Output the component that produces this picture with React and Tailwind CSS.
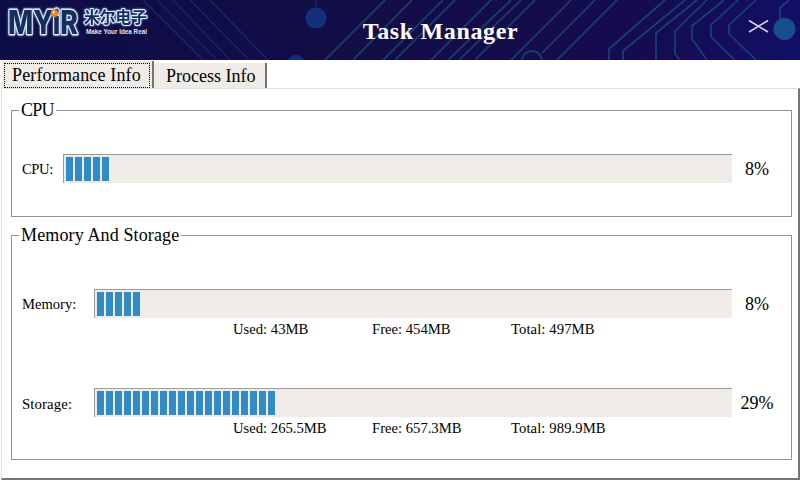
const blocks = (n) => Array.from({ length: n }, (_, i) => <div key={i} className="h-6 w-[7px] shrink-0 bg-[#308cc6]" />);

function Bar({ count }) {
  return (
    <div className="flex h-[29px] grow gap-[2px] border-l border-t border-[#9f9b98] bg-[#efebe7] pl-[2px] pt-[2px]">
      {blocks(count)}
    </div>
  );
}

function Meter({ label, labelClass, count, value }) {
  return (
    <div className="flex h-[29px] items-center pr-[9px]">
      <div className={labelClass}>{label}</div>
      <Bar count={count} />
      <div className="w-[50px] pt-[1px] text-center text-[18px] leading-[20px]">{value}</div>
    </div>
  );
}

function Stats({ used, free, total }) {
  return (
    <div className="flex pl-[211px] text-[14.65px] leading-[18px]">
      <div className="w-[139px]">Used: {used}</div>
      <div className="w-[139px]">Free: {free}</div>
      <div className="tracking-[0.1px]">Total: {total}</div>
    </div>
  );
}

function Logo() {
  return (
    <svg className="absolute left-0 top-0" width="200" height="60">
      <g className="[filter:drop-shadow(0_0_1px_#8fa9dc)]" fill="#142f5c" stroke="#dbe7fb" strokeLinejoin="round" paintOrder="stroke">
        <text x="8" y="33.5" fontFamily="Inter, sans-serif" fontWeight="800" fontSize="32" strokeWidth="2.8" textLength="70" lengthAdjust="spacingAndGlyphs">MYiR</text>
        <text x="84" y="22.5" fontFamily="'Noto Sans CJK SC', sans-serif" fontWeight="700" fontSize="15.5" strokeWidth="2.2" textLength="63" lengthAdjust="spacingAndGlyphs">米尔电子</text>
      </g>
      <text x="86" y="34" fill="#dfe7f8" fontFamily="'Liberation Sans Narrow', 'Liberation Sans', sans-serif" fontWeight="700" fontSize="8" textLength="61" lengthAdjust="spacingAndGlyphs">Make Your Idea Real</text>
      <circle cx="54.5" cy="13.3" r="3.8" fill="#ee8423" />
      <circle cx="53.6" cy="12.2" r="1.4" fill="#ffd071" />
    </svg>
  );
}

function Circuit() {
  return (
    <svg className="absolute inset-0" width="800" height="60" fill="none">
      <defs>
        <linearGradient id="sky">
          <stop offset="0" stopColor="#0d0d46" />
          <stop offset=".5" stopColor="#140d48" />
          <stop offset=".8" stopColor="#150c50" />
          <stop offset="1" stopColor="#120f66" />
        </linearGradient>
      </defs>
      <rect width="800" height="60" fill="url(#sky)" />
      <g stroke="#15336f" strokeWidth="1.3" opacity=".8">
        <path d="M143 0L203 60M157 0L217 60M173 0L230 60M190 0L249 60M210 0L268 60" />
        <path d="M316 0V8" />
      </g>
      <g stroke="#17436f" strokeWidth="1.7">
        <path d="M385 0L325 60M412 0L353 60M443 0L383 60M455 0L395 60M491 0L431 60M511 0L448 60M521 0L459 60M535 0L475 60M571 0L511 60M595 0L542 53M617 0L557 60" />
        <path d="M665 0L609 49V60M685 0L623 51V60M697 0L656 33V60M707 0L675 31V54L680 60M724 0L692 26V39L707 60M738 0L711 25V37L735 60M756 0L729 25V34L756 60M789 0L780 8V19" />
        <circle cx="532" cy="61" r="10" />
      </g>
      <circle cx="316" cy="18" r="10.5" fill="#12317a" />
      <circle cx="296" cy="63" r="8" fill="#12317a" />
      <circle cx="784.5" cy="29" r="11" fill="#15508d" />
      <path d="M749 20.5L768 32M768 20.5L749 32" stroke="#d8d5e8" strokeWidth="1.6" />
    </svg>
  );
}

export default function App() {
  return (
    <div className="flex h-[480px] w-[800px] flex-col overflow-hidden bg-white font-['Liberation_Serif',serif] text-black">
      <header className="relative flex h-[60px] shrink-0 items-center justify-center">
        <Circuit />
        <Logo />
        <h1 className="relative pl-[81px] pt-[2px] text-[24px] font-bold leading-[30px] tracking-[0.65px] text-white">Task Manager</h1>
      </header>
      <nav className="flex h-[28px] shrink-0 items-start pl-[2px] pt-[1px]">
        <div className="h-7 w-[152px] border-r-2 border-[#777370] bg-[#efebe7] pl-[2px] pt-[2px]">
          <div className="h-[25px] w-[146px] border border-dotted border-black pl-[7px] text-[18px] leading-[23px] tracking-[0.15px]">Performance Info</div>
        </div>
        <div className="mt-[2px] h-[25px] w-[113px] border-r-2 border-[#777370] bg-[#efebe7] pl-[12px] text-[18px] leading-[26px]">Process Info</div>
      </nav>
      <main className="ml-px flex grow flex-col border-b-2 border-l border-r-2 border-t border-b-[#777370] border-l-[#e5e3e1] border-r-[#777370] border-t-[#e5e3e1] pl-[9px] pr-[6px] pt-[21px]">
        <section className="h-[107px] shrink-0 border border-[#949290]">
          <h2 className="-mt-[11px] ml-[7px] h-5 w-fit bg-white px-[2px] text-[18px] leading-5 tracking-[-0.7px]">CPU</h2>
          <div className="pl-[10px] pt-[34px]">
            <Meter label="CPU:" labelClass="w-[41px] text-[14.6px] tracking-[-0.4px] pt-[3px]" count={5} value="8%" />
          </div>
        </section>
        <section className="mt-[18px] h-[225px] shrink-0 border border-[#949290]">
          <h2 className="-mt-[11px] ml-[7px] h-5 w-fit bg-white px-[2px] text-[18px] leading-5 tracking-[0.13px]">Memory And Storage</h2>
          <div className="pl-[10px] pt-[44px]">
            <Meter label="Memory:" labelClass="w-[72px] text-[14.6px] pt-[2px]" count={5} value="8%" />
            <div className="pt-[2px]"><Stats used="43MB" free="454MB" total="497MB" /></div>
            <div className="pt-[50px]">
              <Meter label="Storage:" labelClass="w-[72px] text-[14.8px] tracking-[0.1px] pt-[3px]" count={20} value="29%" />
              <div className="pt-[2px]"><Stats used="265.5MB" free="657.3MB" total="989.9MB" /></div>
            </div>
          </div>
        </section>
      </main>
    </div>
  );
}
